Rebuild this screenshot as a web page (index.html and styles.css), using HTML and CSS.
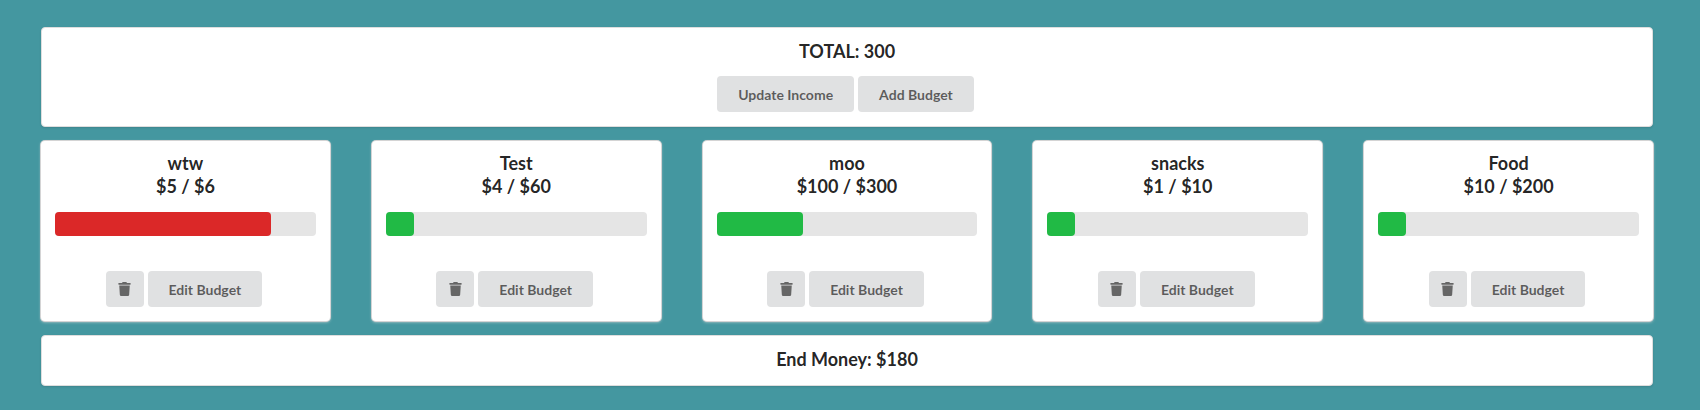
FILE: index.html
```html
<!DOCTYPE html>
<html lang="en">
<head>
<meta charset="utf-8">
<title>Budget</title>
<link rel="stylesheet" href="styles.css">
</head>
<body>
<svg class="sprite" aria-hidden="true">
  <symbol id="trash" viewBox="0 0 448 512">
    <path d="M432 32H312l-9.4-18.7A24 24 0 0 0 281.1 0H166.8a23.72 23.72 0 0 0-21.4 13.3L136 32H16A16 16 0 0 0 0 48v32a16 16 0 0 0 16 16h416a16 16 0 0 0 16-16V48a16 16 0 0 0-16-16zM53.2 467a48 48 0 0 0 47.9 45h245.8a48 48 0 0 0 47.9-45L416 128H32z"/>
  </symbol>
</svg>
<main class="page">
  <section class="segment">
    <h1 class="heading">TOTAL: 300</h1>
    <div class="actions">
      <button class="button" type="button">Update Income</button>
      <button class="button" type="button">Add Budget</button>
    </div>
  </section>

  <section class="cards">
    <article class="card">
      <h2 class="heading">wtw<br>$5 / $6</h2>
      <div class="progress" role="progressbar" aria-label="wtw" aria-valuenow="5" aria-valuemax="6"><div class="bar over" style="width: 83%"></div></div>
      <div class="actions">
        <button class="button icon-button" type="button" aria-label="Delete wtw"><svg class="icon"><use href="#trash"/></svg></button>
        <button class="button" type="button">Edit Budget</button>
      </div>
    </article>
    <article class="card">
      <h2 class="heading">Test<br>$4 / $60</h2>
      <div class="progress" role="progressbar" aria-label="Test" aria-valuenow="4" aria-valuemax="60"><div class="bar" style="width: 7%"></div></div>
      <div class="actions">
        <button class="button icon-button" type="button" aria-label="Delete Test"><svg class="icon"><use href="#trash"/></svg></button>
        <button class="button" type="button">Edit Budget</button>
      </div>
    </article>
    <article class="card">
      <h2 class="heading">moo<br>$100 / $300</h2>
      <div class="progress" role="progressbar" aria-label="moo" aria-valuenow="100" aria-valuemax="300"><div class="bar" style="width: 33%"></div></div>
      <div class="actions">
        <button class="button icon-button" type="button" aria-label="Delete moo"><svg class="icon"><use href="#trash"/></svg></button>
        <button class="button" type="button">Edit Budget</button>
      </div>
    </article>
    <article class="card">
      <h2 class="heading">snacks<br>$1 / $10</h2>
      <div class="progress" role="progressbar" aria-label="snacks" aria-valuenow="1" aria-valuemax="10"><div class="bar" style="width: 10%"></div></div>
      <div class="actions">
        <button class="button icon-button" type="button" aria-label="Delete snacks"><svg class="icon"><use href="#trash"/></svg></button>
        <button class="button" type="button">Edit Budget</button>
      </div>
    </article>
    <article class="card">
      <h2 class="heading">Food<br>$10 / $200</h2>
      <div class="progress" role="progressbar" aria-label="Food" aria-valuenow="10" aria-valuemax="200"><div class="bar" style="width: 5%"></div></div>
      <div class="actions">
        <button class="button icon-button" type="button" aria-label="Delete Food"><svg class="icon"><use href="#trash"/></svg></button>
        <button class="button" type="button">Edit Budget</button>
      </div>
    </article>
  </section>

  <section class="segment">
    <h2 class="heading">End Money: $180</h2>
  </section>
</main>
</body>
</html>
```
FILE: styles.css
```css
*,
*::before,
*::after {
  box-sizing: border-box;
}

body {
  margin: 0;
  background: #4497a0;
  color: rgba(0, 0, 0, 0.87);
  font-family: Lato, "Liberation Sans", sans-serif;
  font-size: 14px;
}

.sprite {
  display: none;
}

.page {
  display: flex;
  flex-direction: column;
  gap: 14px;
  padding: 27px 47px 24px 41px;
}

.segment {
  padding: 12px 14px 14px;
  text-align: center;
  background: #fff;
  border: 1px solid #dedede;
  border-radius: 4px;
  box-shadow: 0 1px 2px 0 rgba(34, 36, 38, 0.15);
}

.heading {
  margin: 0;
  font-size: 18px;
  font-weight: 700;
  line-height: 23px;
}

.actions {
  display: flex;
  justify-content: center;
  gap: 4px;
  padding-right: 3px;
}

.segment .actions {
  margin-top: 13px;
}

.button {
  height: 36px;
  padding: 2px 21px 0;
  font: inherit;
  font-weight: 700;
  line-height: 14px;
  color: rgba(0, 0, 0, 0.6);
  background: #e0e1e2;
  border: 0;
  border-radius: 4px;
  cursor: pointer;
}

.icon-button {
  display: flex;
  align-items: center;
  justify-content: center;
  width: 38px;
  padding: 0;
}

.icon {
  width: 13px;
  height: 14px;
  fill: #666;
}

.cards {
  display: grid;
  grid-template-columns: repeat(5, 1fr);
  gap: 42px;
}

.card {
  padding: 11px 14px 14px;
  text-align: center;
  background: #fff;
  border-radius: 4px;
  box-shadow: 0 1px 3px 0 #d4d4d5, 0 0 0 1px #d4d4d5;
}

.progress {
  margin: 14px 0 35px;
  background: #e5e5e5;
  border-radius: 4px;
}

.bar {
  min-width: 28px;
  height: 24px;
  background: #21ba45;
  border-radius: 4px;
}

.bar.over {
  background: #db2828;
}
```
